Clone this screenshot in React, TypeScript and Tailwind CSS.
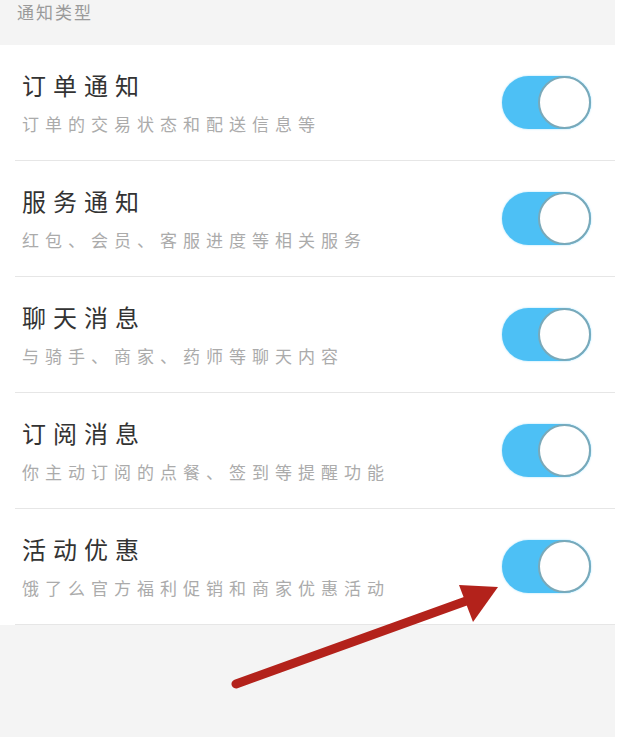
import React from "react";

const rows = [
  { t: "订单通知", s: "订单的交易状态和配送信息等" },
  { t: "服务通知", s: "红包、会员、客服进度等相关服务" },
  { t: "聊天消息", s: "与骑手、商家、药师等聊天内容" },
  { t: "订阅消息", s: "你主动订阅的点餐、签到等提醒功能" },
  { t: "活动优惠", s: "饿了么官方福利促销和商家优惠活动" },
];

function Toggle() {
  return (
    <div className="w-[89px] h-[53px] rounded-full bg-[#4dc0f5] flex items-center justify-end shrink-0 shadow-[0_0_2px_rgba(79,195,247,0.6)]">
      <div className="w-[53px] h-[53px] rounded-full bg-white border-2 border-[#7aa9b9]" />
    </div>
  );
}

export default function App() {
  return (
    <div
      className="relative w-[631px] h-[737px] bg-white"
      style={{ fontFamily: '"Noto Sans CJK SC", "Noto Sans", sans-serif' }}
    >
      <div className="w-[615px] h-full bg-[#f4f4f4] flex flex-col">
        <div className="h-[45px] pl-[17px] pt-[3px] text-[17px] leading-[18px] tracking-[2px] text-[#9a9a9a]">
          通知类型
        </div>
        <div className="bg-white">
          {rows.map((r, i) => (
            <div key={i} className="pl-[15px]">
              <div className="h-[116px] flex items-center justify-between pr-[24px] pl-[7px] border-b border-[#e6e6e6]">
                <div className="flex flex-col gap-[11px]">
                  <div className="text-[24px] leading-[32px] tracking-[7px] text-[#333333]">{r.t}</div>
                  <div className="text-[17px] leading-[24px] tracking-[6px] text-[#ababab]">{r.s}</div>
                </div>
                <Toggle />
              </div>
            </div>
          ))}
        </div>
      </div>
      <svg className="absolute left-0 top-0 pointer-events-none" width="631" height="737" viewBox="0 0 631 737">
        <line x1="236" y1="684" x2="480" y2="596" stroke="#b3221b" strokeWidth="9" strokeLinecap="round" />
        <polygon points="498,587 459,585 473,622" fill="#b3221b" />
      </svg>
    </div>
  );
}
